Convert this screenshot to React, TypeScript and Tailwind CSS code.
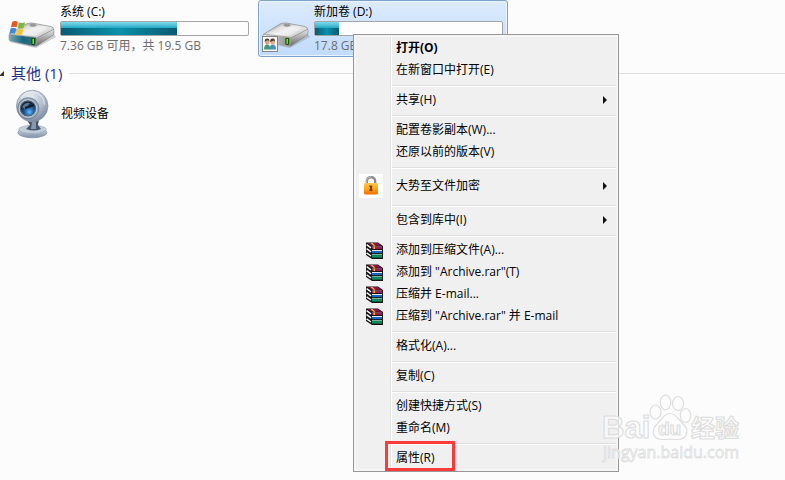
import { Fragment, ReactNode } from "react";

function DriveIcon({ system }: { system?: boolean }) {
  const id = system ? "sys" : "vol";
  return (
    <svg viewBox="5 12 52 40" className="h-10 w-[52px] shrink-0" aria-hidden="true">
      <defs>
        <linearGradient id={`${id}-top`} x1="0" y1="0" x2="1" y2="1">
          <stop offset="0" stopColor="#999" />
          <stop offset="0.5" stopColor="#ececec" />
          <stop offset="1" stopColor="#b8b8b8" />
        </linearGradient>
        <linearGradient id={`${id}-front`} x1="0" y1="0" x2="1" y2="0">
          <stop offset="0" stopColor={system ? "#7fa9b5" : "#e4e4e4"} />
          <stop offset="0.5" stopColor={system ? "#17687e" : "#b9b9b9"} />
          <stop offset="1" stopColor={system ? "#3f6f78" : "#848484"} />
        </linearGradient>
        <linearGradient id={`${id}-side`} x1="0" y1="0" x2="0" y2="1">
          <stop offset="0" stopColor="#e8e8e8" />
          <stop offset="1" stopColor="#686868" />
        </linearGradient>
      </defs>
      <path d="M9 42 L36 48 L56 37 L54 34 L34 44 Z" fill="#777" opacity="0.35" />
      <path d="M9 34.5 L26 24 Q28 23 32 23 L51 26.5 Q54 27.5 53.5 30 L36.5 39 L11 36 Z" fill={`url(#${id}-top)`} stroke="#8a8a8a" strokeWidth="0.7" />
      <path d="M14 34 L28 25.2 L48 28 L35 36.2 Z" fill="#fff" opacity="0.35" />
      <ellipse cx="33" cy="25.3" rx="3.2" ry="1.1" fill="#9d9d9d" stroke="#777" strokeWidth="0.5" />
      <path d="M36.5 38 L53.8 29.3 Q54.6 32 53.4 35 L37 45.7 Q36 46.2 35 45.9 Z" fill={`url(#${id}-side)`} stroke="#777" strokeWidth="0.5" />
      <path d="M9 35 Q9 34 11 34.4 L35.5 37.2 Q37 37.6 36.8 39.5 L36 45.2 Q35.7 46.6 34 46.3 L10.5 41.3 Q9 40.7 9 39 Z" fill={`url(#${id}-front)`} stroke="#a2a2a2" strokeWidth="0.8" />
      <rect x="31.4" y="38" width="3.6" height="6.8" rx="0.7" fill="#123f0a" />
      <rect x="32.4" y="38.8" width="1.7" height="5.1" fill="#5cec22" />
      {system ? (
        <g>
          <path d="M12.3 21.8 Q15.2 20.4 17.8 21.8 L16.6 27.4 Q13.8 26.2 10.9 27.4 Z" fill="#e3592a" />
          <path d="M18.8 22.3 Q21.7 23.6 25 22.3 L23.6 28 Q20.9 29 17.6 27.8 Z" fill="#7db83b" />
          <path d="M10.6 28.5 Q13.4 27.2 16.3 28.5 L15 34 Q12.2 32.7 9.2 34 Z" fill="#3f8cd2" />
          <path d="M17.3 29 Q20.2 30.2 23.3 29 L21.9 34.6 Q19 35.6 16 34.4 Z" fill="#f8c42c" />
        </g>
      ) : (
        <g>
          <rect x="8.5" y="36.5" width="15" height="15" fill="#f7f7f7" stroke="#858585" />
          <path d="M10 49.5 Q10 44.5 13.3 44.5 Q16 44.5 16.5 49.5 Z" fill="#3f9a75" />
          <path d="M15.5 49.5 Q15.5 44.5 18.7 44.5 Q22 44.5 22 49.5 Z" fill="#4c91b4" />
          <ellipse cx="13.3" cy="42" rx="2.2" ry="2.8" fill="#d5a680" />
          <ellipse cx="18.6" cy="42" rx="2.2" ry="2.8" fill="#dbb08c" />
          <path d="M10.8 42 Q10.5 38.6 13.2 38.6 Q15.6 38.6 15.5 41 Q13.5 39.9 12.3 40.7 Z M16.2 42 Q16 38.6 18.6 38.6 Q21.3 38.6 21 42 L20 40.5 Z" fill="#4c3b34" />
        </g>
      )}
    </svg>
  );
}

function WebcamIcon() {
  return (
    <svg viewBox="14 89 36 50" className="h-[50px] w-9 shrink-0" aria-hidden="true">
      <defs>
        <radialGradient id="cam-head" cx="0.42" cy="0.25" r="0.75">
          <stop offset="0" stopColor="#eef2f7" />
          <stop offset="0.55" stopColor="#b5c0cf" />
          <stop offset="1" stopColor="#7c8ba0" />
        </radialGradient>
        <linearGradient id="cam-base" x1="0" y1="0" x2="0" y2="1">
          <stop offset="0" stopColor="#dbe2eb" />
          <stop offset="1" stopColor="#7f8fa6" />
        </linearGradient>
        <radialGradient id="cam-lens" cx="0.6" cy="0.75" r="0.65">
          <stop offset="0" stopColor="#65b9ff" />
          <stop offset="0.45" stopColor="#2469ae" />
          <stop offset="1" stopColor="#101d2e" />
        </radialGradient>
      </defs>
      <ellipse cx="32.3" cy="132.5" rx="14.5" ry="5.3" fill="url(#cam-base)" stroke="#8493a9" strokeWidth="0.7" />
      <ellipse cx="32.5" cy="129.3" rx="13.8" ry="4" fill="#c3cedb" stroke="#93a2b6" strokeWidth="0.5" />
      <path d="M27 120 H39 L38 125 L41 129 Q34 132 26 129 L30 125 Z" fill="#46566b" />
      <path d="M32 122 H36 V129 H31 Z" fill="#8798af" />
      <circle cx="32.2" cy="106" r="15.8" fill="url(#cam-head)" stroke="#8f9cae" strokeWidth="0.7" />
      <path d="M21 98 Q27 90 37 93 Q44 96 44.5 105" fill="none" stroke="#fff" strokeWidth="1.4" opacity="0.45" />
      <circle cx="28.3" cy="108.3" r="10.6" fill="#9cabbd" stroke="#66758a" strokeWidth="0.8" />
      <circle cx="28" cy="108.4" r="8.7" fill="#546477" stroke="#d8e0e9" strokeWidth="0.8" />
      <circle cx="28" cy="108.5" r="7" fill="url(#cam-lens)" />
      <path d="M22 107 Q25 102 30 103 L25 109 Z" fill="#819bb5" opacity="0.65" />
      <path d="M25 108 L34 105" stroke="#111c2a" strokeWidth="2" />
    </svg>
  );
}

function LockIcon() {
  return (
    <svg viewBox="0 0 24 24" className="h-6 w-6" aria-hidden="true">
      <defs>
        <linearGradient id="lock-body" x1="0" y1="0" x2="0" y2="1">
          <stop offset="0" stopColor="#ffc84e" />
          <stop offset="0.5" stopColor="#ffa51c" />
          <stop offset="1" stopColor="#f36d05" />
        </linearGradient>
      </defs>
      <rect width="24" height="24" fill="#fff" />
      <path d="M7.8 11 V7.6 Q7.8 3.2 12 3.2 Q16.2 3.2 16.2 7.6 V11" fill="none" stroke="#8d8d8d" strokeWidth="2.4" />
      <path d="M7.5 10 V7.4 Q7.5 3 12 3" fill="none" stroke="#c7c7c7" strokeWidth="0.8" />
      <rect x="5" y="9" width="14" height="11.5" rx="1.5" fill="url(#lock-body)" />
      <path d="M10.3 11.5 H13.3 V13 H13 V15.5 H13.5 V17 H10.3 V15.5 H11 V13 H10.3 Z" fill="#713f15" />
    </svg>
  );
}

function ArchiveIcon() {
  return (
    <svg viewBox="0 0 17 17" className="h-[17px] w-[17px]" aria-hidden="true">
      <path d="M0 0.5 H12 L17 4 V17 H6 L0 13 Z" fill="#151515" />
      <path d="M1.5 1 H11.5 L15.5 3.8 H5.5 Z" fill="#8d1050" />
      <path d="M6 4.5 H16 V5.5 H6 Z" fill="#ec66b0" />
      <path d="M6 5.5 H16 V7 H6 Z" fill="#a00f5c" />
      <path d="M6 8 H16 V9 H6 Z" fill="#e4e8f2" />
      <path d="M6 9 H16 V11.2 H6 Z" fill="#1766bb" />
      <path d="M6 12.2 H16 V13.2 H6 Z" fill="#8be0bd" />
      <path d="M6 13.2 H16 V15.6 H6 Z" fill="#0b9362" />
      <path d="M0.6 2.6 L5 5.8 M0.6 6.6 L5 9.9 M0.6 10.8 L5 14" stroke="#f4f4f4" strokeWidth="1.5" />
      <path d="M4.5 1 H6.5 L9.5 3.8 H7.5 Z M7.5 4.5 H9 V7 H7.5 Z" fill="#d9c927" />
    </svg>
  );
}

type DriveProps = { name: string; detail: string; used: string; system?: boolean; selected?: boolean };

function Drive({ name, detail, used, system, selected }: DriveProps) {
  return (
    <button
      type="button"
      className={
        "flex h-[57px] w-[250px] shrink-0 rounded-[3px] border text-left " +
        (selected
          ? "border-[#7da2ce] bg-linear-to-b from-[#dcebfd] to-[#c1dbfc] shadow-[inset_0_0_0_1px_#ebf3fd]"
          : "border-transparent")
      }
    >
      <span className="mt-[11px]">
        <DriveIcon system={system} />
      </span>
      <span className="ml-[3px] flex w-[189px] flex-col pt-px">
        <span className="leading-[19px]">{name}</span>
        <span className="flex h-[15px] rounded-[2px] border border-[#a5a5a5] bg-[#fdfdfd]">
          <span
            className="bg-linear-to-b from-[#74d6e9] from-5% via-[#22a9c4] via-45% to-[#0fa9c4]"
            style={{ width: used }}
          >
            <span className="flex h-full flex-col justify-end">
              <span className="block h-[7px] bg-linear-to-r from-[#04475d] via-[#078ba5] via-50% to-[#04475d] opacity-80" />
            </span>
          </span>
        </span>
        <span className="whitespace-nowrap leading-5 text-[#6d6d6d]">{detail}</span>
      </span>
    </button>
  );
}

type Item = { label: string; icon?: ReactNode; bold?: boolean; submenu?: boolean; tall?: boolean; marked?: boolean };

const groups: Item[][] = [
  [{ label: "打开(O)", bold: true }, { label: "在新窗口中打开(E)" }],
  [{ label: "共享(H)", submenu: true }],
  [{ label: "配置卷影副本(W)..." }, { label: "还原以前的版本(V)" }],
  [{ label: "大势至文件加密", icon: <LockIcon />, submenu: true, tall: true }],
  [{ label: "包含到库中(I)", submenu: true }],
  [
    { label: "添加到压缩文件(A)...", icon: <ArchiveIcon /> },
    { label: '添加到 "Archive.rar"(T)', icon: <ArchiveIcon /> },
    { label: "压缩并 E-mail...", icon: <ArchiveIcon /> },
    { label: '压缩到 "Archive.rar" 并 E-mail', icon: <ArchiveIcon /> },
  ],
  [{ label: "格式化(A)..." }],
  [{ label: "复制(C)" }],
  [{ label: "创建快捷方式(S)" }, { label: "重命名(M)" }],
  [{ label: "属性(R)", marked: true }],
];

function MenuRow({ item }: { item: Item }) {
  return (
    <button
      type="button"
      role="menuitem"
      className={"relative flex w-full items-center pr-[9px] text-left " + (item.tall ? "h-[30px]" : "h-[22px]")}
    >
      <span className="flex w-[27px] shrink-0 justify-end">{item.icon}</span>
      <span className={"ml-[13px] grow whitespace-nowrap " + (item.bold ? "font-bold" : "")}>{item.label}</span>
      {item.submenu && (
        <svg viewBox="0 0 4 8" className="h-2 w-1" aria-hidden="true">
          <path d="M0 0 L4 4 L0 8 Z" fill="#111" />
        </svg>
      )}
      {item.marked && <span className="absolute -top-1.5 left-[29px] h-[30px] w-[70px] border-3 border-[#fb3b3b]" />}
    </button>
  );
}

function ContextMenu() {
  return (
    <div role="menu" className="absolute left-[353px] top-[34px] w-[266px] border border-[#979797] bg-[#f5f5f5] p-0.5">
      <div className="relative bg-[#f0f0f0]">
        <div className="absolute inset-y-0 left-[34px] w-0.5 border-l border-[#e2e3e3] bg-white" />
        {groups.map((group, i) => (
          <Fragment key={i}>
            {i > 0 && (
              <div role="separator" className="h-2 pl-9 pt-1">
                <div className="h-0.5 border-t border-[#dfdfdf] bg-white" />
              </div>
            )}
            {group.map((item) => (
              <MenuRow key={item.label} item={item} />
            ))}
          </Fragment>
        ))}
      </div>
    </div>
  );
}

function Watermark() {
  return (
    <svg
      viewBox="600 390 150 75"
      className="pointer-events-none absolute left-[600px] top-[390px] h-[75px] w-[150px]"
      fill="#fcfcfc"
      fillOpacity="0.7"
      stroke="#dedede"
      strokeWidth="1.2"
      fontFamily="'Liberation Sans', 'Noto Sans CJK SC', sans-serif"
      aria-label="Baidu 经验"
    >
      <text x="602" y="438" fontSize="31" fontWeight="700">Bai</text>
      <ellipse cx="655.5" cy="412" rx="5.5" ry="7" />
      <ellipse cx="665.5" cy="402.5" rx="5.3" ry="7.3" />
      <ellipse cx="678" cy="403.5" rx="5.5" ry="7" />
      <ellipse cx="685.5" cy="415.5" rx="5.3" ry="7" />
      <path d="M670 413.5 C676 413.5 678 419 682 423 C687 427 688 430 686 435 C684 440 678 440 670 439 C662 440 656 440 654 435 C652 430 654 427 658 423 C662 419 664 413.5 670 413.5 Z" />
      <text x="658" y="435" fontSize="19" fontWeight="700">du</text>
      <text x="691" y="437" fontSize="24" fontWeight="700">经验</text>
      <text x="603" y="458" fontSize="16" fontFamily="'Open Sans', sans-serif" strokeWidth="0.8">jingyan.baidu.com</text>
    </svg>
  );
}

export default function App() {
  return (
    <main className="relative min-h-screen overflow-hidden bg-[#fcfcfc] font-['Open_Sans','Noto_Sans_CJK_SC',sans-serif] text-xs text-black">
      <section className="flex gap-1 px-1">
        <Drive name="系统 (C:)" detail="7.36 GB 可用，共 19.5 GB" used="62%" system />
        <Drive name="新加卷 (D:)" detail="17.8 GB 可用" used="13%" selected />
      </section>
      <section>
        <h2 className="mt-1.5 flex h-5 items-center text-[15px] leading-5 text-[#1e3287]">
          <svg viewBox="0 0 4 5" className="mr-[7px] h-[5px] w-1" aria-hidden="true">
            <path d="M4 0 V5 H0 V4 Z" fill="#333" />
          </svg>
          其他 (1)
          <span className="ml-[7px] h-px grow bg-[#dfdfdf]" />
        </h2>
        <button type="button" className="mt-1.5 flex items-center pl-3.5 text-left">
          <WebcamIcon />
          <span className="ml-[11px]">视频设备</span>
        </button>
      </section>
      <ContextMenu />
      <Watermark />
    </main>
  );
}
